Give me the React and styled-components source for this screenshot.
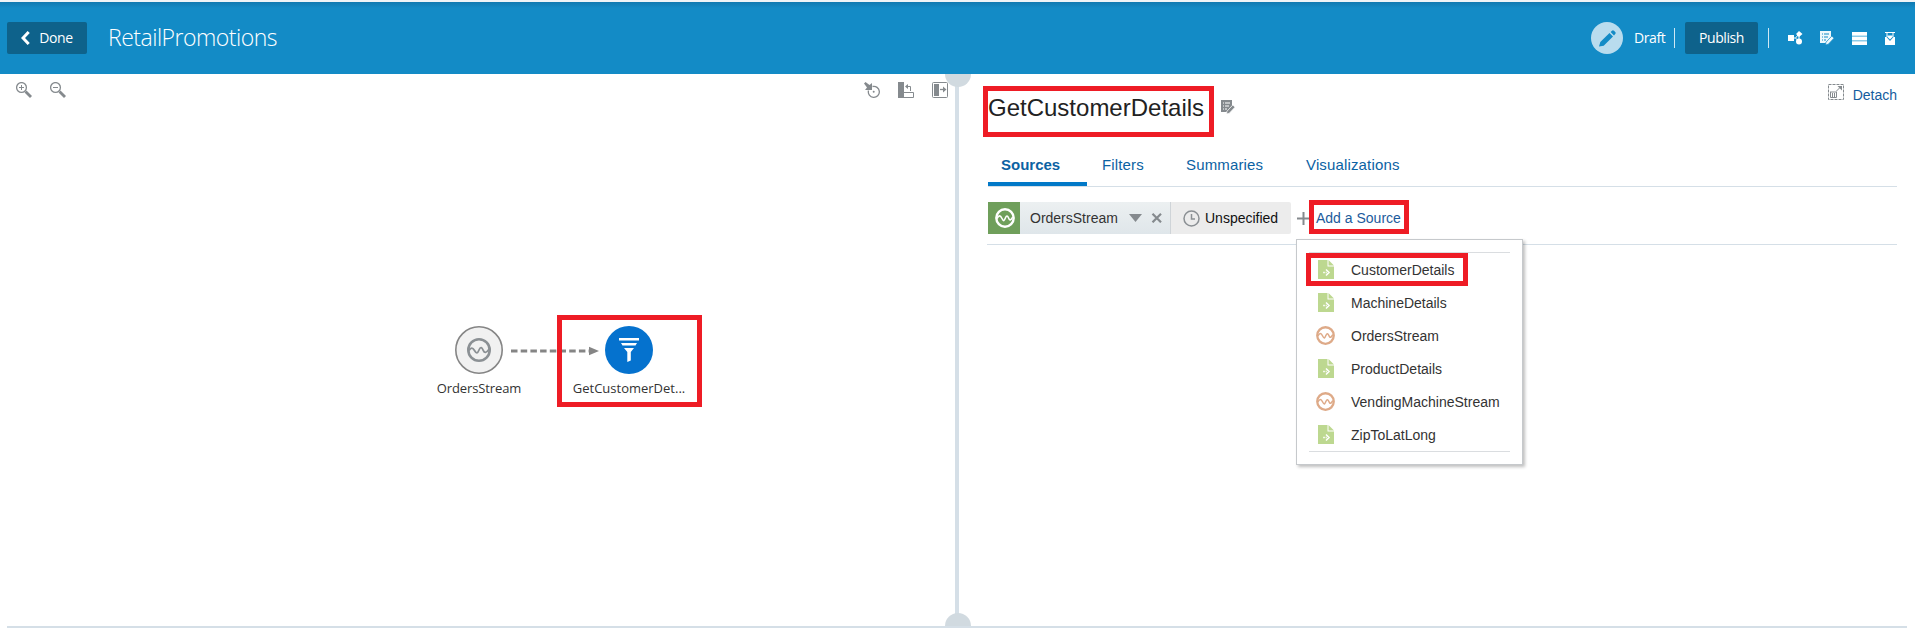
import React from "react";
import styled, { createGlobalStyle } from "styled-components";

const Global = createGlobalStyle`
  * { box-sizing: border-box; }
  body { margin: 0; background: #fff; font-family: "Liberation Sans", Arial, sans-serif; font-size: 14px; color: #333; overflow: hidden; }
  svg { display: block; flex: none; }
`;
const humanist = `"Open Sans", "Noto Sans", sans-serif`;

const Page = styled.div`
  position: relative;
  display: flex;
  flex-direction: column;
  width: 1915px;
  height: 628px;
`;
const Header = styled.header`
  display: flex;
  align-items: center;
  height: 74px;
  padding: 0 19px 0 7px;
  border-top: 2px solid #eff4f7;
  background: linear-gradient(#1079b1, #138bc6 6px);
  color: #fff;
  font-family: ${humanist};
`;
const HeaderButton = styled.button`
  display: flex;
  align-items: center;
  justify-content: center;
  gap: 9px;
  width: ${(p) => p.$width}px;
  height: 32px;
  padding: 0;
  border: 0;
  border-radius: 2px;
  background: #0e628b;
  color: #fff;
  font: 14px/30px ${humanist};
  letter-spacing: ${(p) => p.$spacing || 0}px;
`;
const ProjectName = styled.h1`
  flex: 1;
  margin: -2px 0 0 21px;
  font-size: 23px;
  font-weight: 300;
  letter-spacing: -0.5px;
`;
const StatusBadge = styled.span`
  display: flex;
  align-items: center;
  justify-content: center;
  width: 32px;
  height: 32px;
  border-radius: 50%;
  background: #b9dcee;
`;
const StatusText = styled.span`
  width: 40px;
  margin: -1px 0 0 11px;
  font-size: 14px;
  letter-spacing: -0.4px;
`;
const Rule = styled.span`
  width: 1px;
  height: 20px;
  margin: 0 ${(p) => p.$right}px 0 ${(p) => p.$left || 0}px;
  background: #cfe8f4;
`;
const HeaderIcons = styled.div`
  display: flex;
  align-items: center;
  justify-content: space-between;
  width: 108px;
`;
const Workspace = styled.main`
  display: flex;
  height: 554px;
  margin: 0 8px 0 7px;
  border-bottom: 2px solid #d5dfe7;
`;
const Canvas = styled.section`
  position: relative;
  width: 948px;
`;
const CanvasBar = styled.div`
  display: flex;
  justify-content: space-between;
  padding: 8px 7px 0 9px;
`;
const IconGroup = styled.div`
  display: flex;
  gap: 18px;
`;
const Node = styled.div`
  position: absolute;
  left: ${(p) => p.$x}px;
  top: 252px;
  display: flex;
  flex-direction: column;
  align-items: center;
  width: 130px;
  font: 13px/18px ${humanist};
  letter-spacing: ${(p) => p.$spacing}px;
  color: #333;
  white-space: nowrap;
`;
const NodeLabel = styled.span`
  margin-top: 5px;
`;
const Link = styled.svg`
  position: absolute;
  left: 504px;
  top: 272px;
`;
const Divider = styled.div`
  display: flex;
  flex-direction: column;
  justify-content: space-between;
  width: 4px;
  background: #d5dfe7;
`;
const Knob = styled.span`
  flex: none;
  width: 26px;
  height: 13px;
  margin-left: -10px;
  border-radius: ${(p) => (p.$top ? "0 0 13px 13px" : "13px 13px 0 0")};
  background: #d1dae0;
`;
const Details = styled.section`
  flex: 1;
  padding: 0 10px 0 29px;
`;
const TitleRow = styled.div`
  display: flex;
  align-items: flex-start;
  height: 58px;
`;
const StageTitle = styled.h2`
  width: 233px;
  margin: 20px 0 0;
  font-size: 24px;
  line-height: 28px;
  font-weight: 400;
  color: #222;
`;
const NoteIcon = styled.span`
  margin-top: 26px;
`;
const Detach = styled.a`
  display: flex;
  align-items: center;
  gap: 9px;
  height: 16px;
  margin: 10px 0 0 auto;
  line-height: 20px;
  color: #145c9e;
`;
const DetachText = styled.span`
  margin-top: 5px;
`;
const Tabs = styled.nav`
  display: flex;
  height: 55px;
  border-bottom: 1px solid #d5dfe7;
`;
const Tab = styled.a`
  width: ${(p) => p.$width}px;
  height: 54px;
  padding: 24px 0 0 ${(p) => p.$inset || 0}px;
  border-bottom: ${(p) => (p.$active ? "4px solid #0279c8" : "0")};
  font-size: 15px;
  line-height: 17px;
  font-weight: ${(p) => (p.$active ? 700 : 400)};
  letter-spacing: ${(p) => (p.$active ? 0 : 0.15)}px;
  color: #0b62a3;
`;
const SourceRow = styled.div`
  display: flex;
  height: 58px;
  margin-left: -1px;
  padding: 15px 0 0 1px;
  border-bottom: 1px solid #d5dfe7;
  line-height: 32px;
`;
const SourceType = styled.span`
  display: flex;
  align-items: center;
  justify-content: center;
  width: 32px;
  height: 32px;
  padding-left: 1px;
  background: #6f9f5b;
`;
const SourceName = styled.div`
  display: flex;
  align-items: center;
  width: 151px;
  height: 32px;
  padding-left: 10px;
  border-right: 1px solid #cfd4d8;
  background: linear-gradient(#ecf0f1, #dfe6ea);
`;
const NameText = styled.span`
  width: 99px;
`;
const Window = styled.div`
  display: flex;
  align-items: center;
  gap: 5px;
  width: 120px;
  height: 32px;
  padding-left: 12px;
  border-radius: 0 2px 2px 0;
  background: #ececec;
  color: #111;
`;
const AddSource = styled.a`
  display: flex;
  align-items: center;
  gap: 6px;
  height: 32px;
  margin-left: 6px;
  color: #1c5b9c;
`;
const Menu = styled.div`
  position: absolute;
  left: 1296px;
  top: 239px;
  width: 227px;
  height: 226px;
  padding: 12px;
  border: 1px solid #c6c9cc;
  background: #fff;
  box-shadow: 2px 2px 3px rgba(0, 0, 0, 0.25);
`;
const MenuList = styled.div`
  height: 200px;
  border-top: 1px solid #dadde0;
  border-bottom: 1px solid #dadde0;
`;
const MenuItem = styled.div`
  display: flex;
  align-items: center;
  height: 33px;
  padding-left: 6px;
`;
const MenuIcon = styled.span`
  display: flex;
  justify-content: center;
  width: 21px;
  margin-right: 15px;
`;
const Highlight = styled.div`
  position: absolute;
  left: ${(p) => p.$x}px;
  top: ${(p) => p.$y}px;
  width: ${(p) => p.$w}px;
  height: ${(p) => p.$h}px;
  border: 5px solid #ee1c25;
  pointer-events: none;
`;

const StreamIcon = ({ size, color, stroke = 2.4 }) => (
  <svg width={size} height={size} viewBox="0 0 20 20" fill="none" stroke={color}>
    <circle cx="10" cy="10" r="8.7" strokeWidth={stroke} />
    <path d="M2 10.500c2-3.500 3.300-3.500 5 0s2.200 2.300 3.400-.5 2.200-2.500 3.300.3 2.300 1.600 4-1.200" strokeWidth="1.600" />
  </svg>
);
const FileIcon = () => (
  <svg width="16" height="19" viewBox="0 0 16 19">
    <path d="M0 0h9.500v6.500H16V19H0z" fill="#bdd890" />
    <path d="M10.500 0 16 5.500h-5.500z" fill="#bdd890" />
    <path d="M8 9.500l3 3-3 3M5.200 12.500h1.600M7.700 12.500h1" fill="none" stroke="#fff" strokeWidth="1.500" />
  </svg>
);
const Magnifier = ({ plus }) => (
  <svg width="16" height="16" viewBox="0 0 16 16" fill="none" stroke="#858a8e">
    <circle cx="5.500" cy="5.500" r="4.900" strokeWidth="1.300" />
    <path d={plus ? "M3 5.500h5M5.500 3v5" : "M3 5.500h5"} />
    <path d="m9.500 9.500 5.500 5.500" strokeWidth="2.800" />
  </svg>
);
const NoteEdit = ({ color, ground }) => (
  <svg width="14" height="14" viewBox="0 0 14 14">
    <path d="M0 0h11v6L5.500 12H0z" fill={color} />
    <path d="M2 3h1m1 0h5M2 6h1m1 0h4M2 9h1m1 0h2" stroke={ground} />
    <path d="M5.500 14 6 11.200 11.800 5 14 7.200 8.300 13.200z" fill={color} stroke={ground} strokeWidth=".7" />
  </svg>
);
const Pencil = () => (
  <svg width="17" height="17" viewBox="0 0 17 17" fill="#138bc6">
    <path d="M0 16.500 1.300 12 10.500 3l3.500 3.500-9.300 9.200zM11.600 2 13 .7q1-.9 2 .1l1.200 1.200q1 1 0 2L15 5.400z" />
  </svg>
);

const sources = [
  ["CustomerDetails", "file"],
  ["MachineDetails", "file"],
  ["OrdersStream", "stream"],
  ["ProductDetails", "file"],
  ["VendingMachineStream", "stream"],
  ["ZipToLatLong", "file"],
];

export default function App() {
  return (
    <Page>
      <Global />
      <Header>
        <HeaderButton $width={80} $spacing={-0.4}>
          <svg width="9" height="14" viewBox="0 0 9 14"><path d="M7.700 1 2 7l5.700 6" fill="none" stroke="#fff" strokeWidth="3" /></svg>
          Done
        </HeaderButton>
        <ProjectName>RetailPromotions</ProjectName>
        <StatusBadge><Pencil /></StatusBadge>
        <StatusText>Draft</StatusText>
        <Rule $right={10} />
        <HeaderButton $width={73} $spacing={-0.4}>Publish</HeaderButton>
        <Rule $left={10} $right={19} />
        <HeaderIcons>
          <svg width="15" height="14" viewBox="0 0 15 14" fill="#fff">
            <path d="M0 4h6v6H0zM11 0l3.500 3L11 6 8 3z" />
            <circle cx="11" cy="10.500" r="3" />
            <path d="M6 7h2.500M8 6.500 10 4M8 7.500l2 2M11 5v3" stroke="#fff" fill="none" />
          </svg>
          <NoteEdit color="#eef8fc" ground="#138bc6" />
          <svg width="15" height="13" viewBox="0 0 15 13"><path d="M0 0h15v13H0z" fill="#8ccbe8" /><path d="M0 0h15v3.500H0zM0 5h15v3H0zM0 9.500h15V13H0z" fill="#fff" /></svg>
          <svg width="12" height="13" viewBox="0 0 12 13">
            <path d="M1 0h10v1H1zM1 5h1.500L6 9l3.500-4H11v8H1z" fill="#fff" />
            <path d="M2.500 1h1v4h-1zM8.500 1h1v4h-1z" fill="#fff" />
            <path d="M3.500 3.500h5v1.500L6 7.500 3.500 5z" fill="#fff" />
          </svg>
        </HeaderIcons>
      </Header>
      <Workspace>
        <Canvas>
          <CanvasBar>
            <IconGroup><Magnifier plus /><Magnifier /></IconGroup>
            <IconGroup>
              <svg width="16" height="16" viewBox="0 0 16 16">
                <path d="M8.500 4.500a5.500 5.500 0 1 1-4 4" fill="none" stroke="#858a8e" strokeWidth="1.300" />
                <path d="M0 1.500 1.500 0l4 3L8 1v7H1l2-2.500z" fill="#858a8e" />
                <circle cx="9.700" cy="9.800" r="1" fill="#858a8e" />
              </svg>
              <svg width="16" height="16" viewBox="0 0 16 16">
                <path d="M0 0h6v16H0zM7 4.500 10 2v5z" fill="#858a8e" />
                <path d="M6 10.500h9.500v5H6M9 4.500h3.500V9" fill="none" stroke="#858a8e" />
              </svg>
              <svg width="16" height="16" viewBox="0 0 16 16">
                <rect x=".5" y=".5" width="15" height="15" rx="1" fill="none" stroke="#858a8e" />
                <path d="M2 2h5v12H2zM11 4.500 14.500 7.500 11 10.500z" fill="#858a8e" />
                <path d="M8 7.500h4" stroke="#858a8e" strokeWidth="1.300" />
              </svg>
            </IconGroup>
          </CanvasBar>
          <Node $x={407} $spacing={-0.1}>
            <svg width="48" height="48" viewBox="0 0 48 48">
              <circle cx="24" cy="24" r="23.200" fill="#f1f1f1" stroke="#858585" strokeWidth="1.600" />
              <g fill="none" stroke="#8b9094"><circle cx="24" cy="24" r="10.700" strokeWidth="2.600" /><path d="M14 24.500c2-3 3.500-3.500 5.500 0s3 3.200 4.500-.5 3-2.500 4.200.3 3 3 6-1.300" strokeWidth="1.800" /></g>
            </svg>
            <NodeLabel>OrdersStream</NodeLabel>
          </Node>
          <Link width="90" height="10" viewBox="0 0 90 10">
            <path d="M0 5h78" stroke="#858585" strokeWidth="3" strokeDasharray="6.500 3.200" />
            <path d="M78 .8 88 5l-10 4.200z" fill="#858585" />
          </Link>
          <Node $x={557} $spacing={0}>
            <svg width="48" height="48" viewBox="0 0 48 48">
              <circle cx="24" cy="24" r="24" fill="#0572ce" />
              <path d="M14 12h20v2.500H14zM16 17h16l-1.500 2.500h-13zM19 22h10l-3.200 4v8.500l-3.500 1.500V26z" fill="#fff" />
            </svg>
            <NodeLabel>GetCustomerDet...</NodeLabel>
          </Node>
        </Canvas>
        <Divider><Knob $top /><Knob /></Divider>
        <Details>
          <TitleRow>
            <StageTitle>GetCustomerDetails</StageTitle>
            <NoteIcon><NoteEdit color="#858a8e" ground="#fff" /></NoteIcon>
            <Detach>
              <svg width="16" height="16" viewBox="0 0 16 16" fill="none" stroke="#858a8e">
                <rect x=".5" y=".5" width="15" height="15" strokeDasharray="3 1" />
                <path d="M2.500 8v5.500h6V8M2 8h7M4.500 9v4M6.500 9v4M8.500 7 12 3.500" />
                <path d="M9.500 2H14v4.500z" fill="#858a8e" stroke="none" />
              </svg>
              <DetachText>Detach</DetachText>
            </Detach>
          </TitleRow>
          <Tabs>
            <Tab $active $width={99} $inset={13}>Sources</Tab>
            <Tab $width={99} $inset={15}>Filters</Tab>
            <Tab $width={120}>Summaries</Tab>
            <Tab $width={120}>Visualizations</Tab>
          </Tabs>
          <SourceRow>
            <SourceType><StreamIcon size={20} color="#fff" /></SourceType>
            <SourceName>
              <NameText>OrdersStream</NameText>
              <svg width="13" height="8" viewBox="0 0 13 8"><path d="M0 0h13L6.500 8z" fill="#858a8e" /></svg>
              <svg width="24" height="10" viewBox="0 0 24 10"><path d="m10.500.8 8.500 8.500m0-8.500-8.500 8.500" stroke="#858a8e" strokeWidth="2.200" /></svg>
            </SourceName>
            <Window>
              <svg width="17" height="17" viewBox="0 0 17 17" fill="none" stroke="#8b9094" strokeWidth="1.500"><circle cx="8.500" cy="8.500" r="7.500" /><path d="M8.500 4v5H12" /></svg>
              Unspecified
            </Window>
            <AddSource>
              <svg width="13" height="15" viewBox="0 0 13 15"><path d="M0 7.500h13M6.500 1v13" stroke="#858a8e" strokeWidth="2" /></svg>
              Add a Source
            </AddSource>
          </SourceRow>
        </Details>
      </Workspace>
      <Menu>
        <MenuList>
          {sources.map(([name, kind]) => (
            <MenuItem key={name}>
              <MenuIcon>{kind === "file" ? <FileIcon /> : <StreamIcon size={19} color="#deaa88" />}</MenuIcon>
              {name}
            </MenuItem>
          ))}
        </MenuList>
      </Menu>
      <Highlight $x={557} $y={315} $w={145} $h={92} />
      <Highlight $x={983} $y={86} $w={231} $h={51} />
      <Highlight $x={1309} $y={200} $w={100} $h={34} />
      <Highlight $x={1306} $y={253} $w={162} $h={33} />
    </Page>
  );
}
